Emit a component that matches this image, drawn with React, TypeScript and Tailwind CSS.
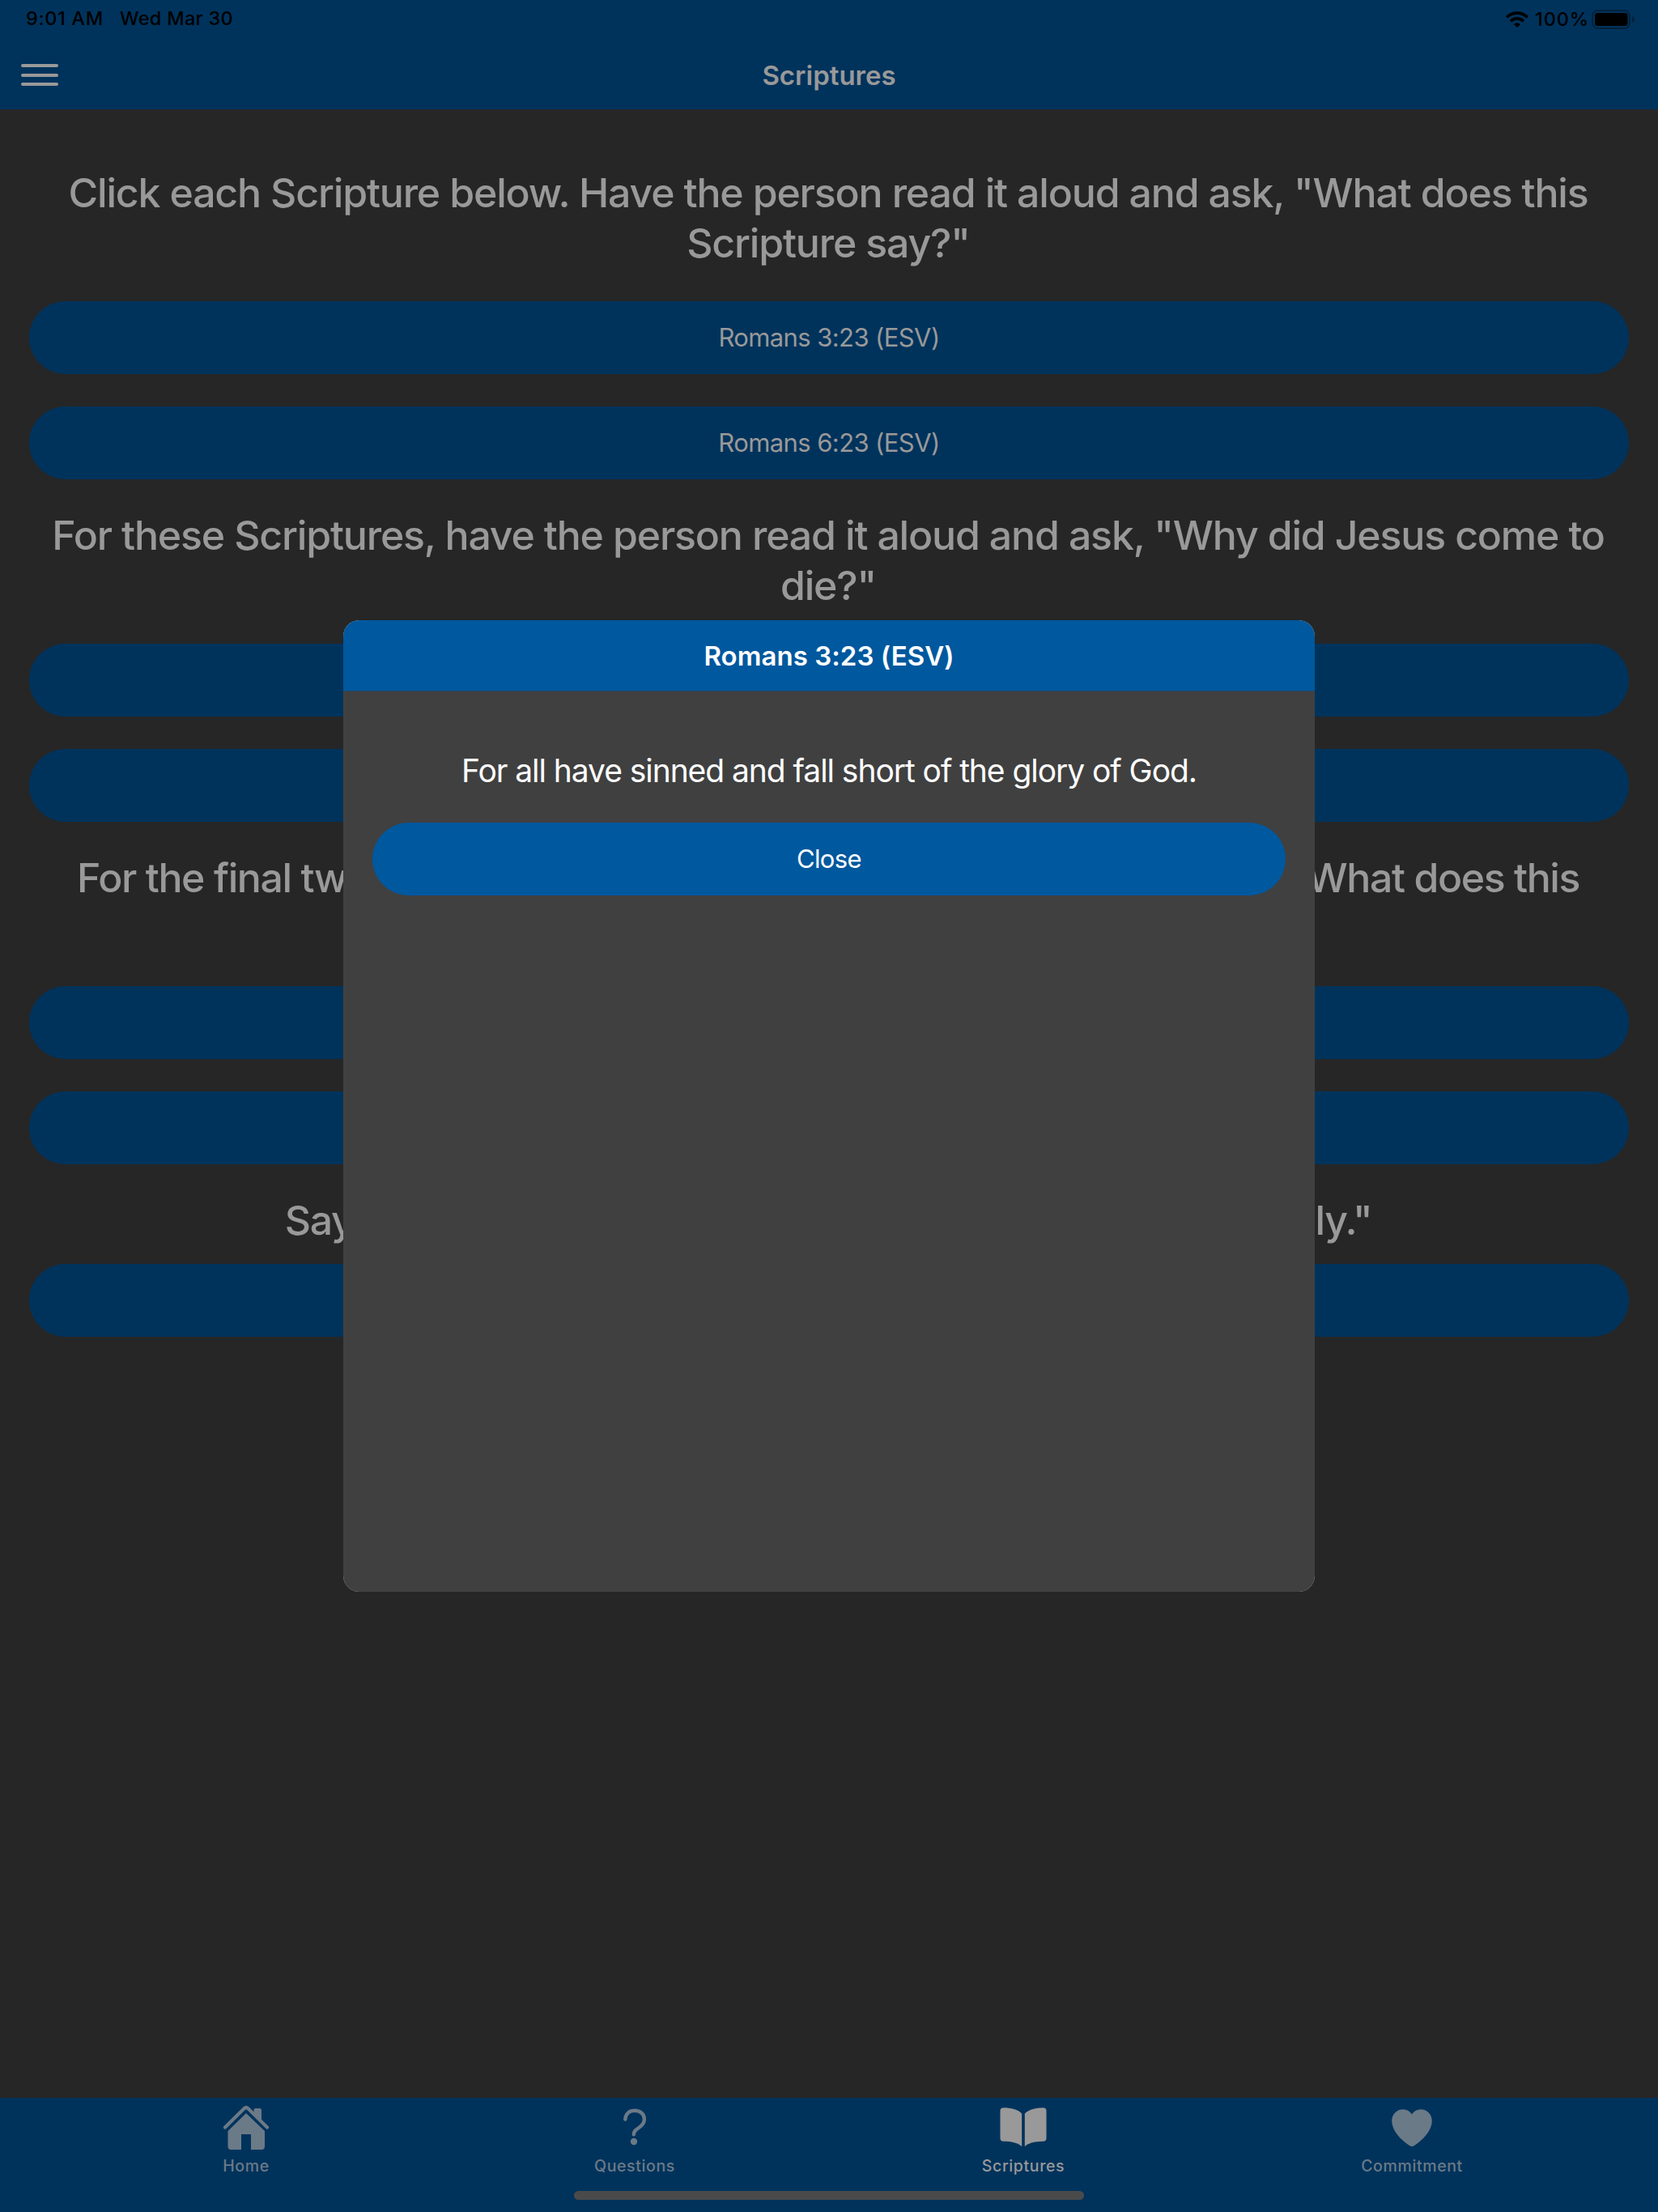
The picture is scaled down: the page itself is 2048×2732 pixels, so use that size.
import type { ReactNode } from "react";

const pillText = "pt-px text-[31px] tracking-[-0.6px]";

function Heading({ children }: { children: ReactNode }) {
  return (
    <h2 className="whitespace-nowrap pr-0.5 text-center text-[50px] font-medium leading-[62px] tracking-[-1.17px] text-[#999999]">
      {children}
    </h2>
  );
}

function Pill({ children }: { children: ReactNode }) {
  return (
    <button
      className={`flex h-[90px] w-full items-center justify-center rounded-full bg-[#00335c] text-[#999999] ${pillText}`}
    >
      {children}
    </button>
  );
}

function Group({ heading, first, second }: { heading: ReactNode; first: string; second: string }) {
  return (
    <section className="flex h-[423px] flex-col">
      <Heading>{heading}</Heading>
      <div className="mt-[41px] flex flex-col gap-10">
        <Pill>{first}</Pill>
        <Pill>{second}</Pill>
      </div>
    </section>
  );
}

function StatusBar() {
  return (
    <div className="flex h-[48px] items-center justify-between pl-8 pr-7 text-[23.5px] font-[450] leading-[46px] text-black">
      <div className="flex h-[46px] self-start">
        <span className="w-[116px] tracking-[0.65px]">9:01 AM</span>
        <span className="tracking-[0.3px]">Wed Mar 30</span>
      </div>
      <div className="flex h-[47px] items-center self-start">
        <svg width="28" height="20" viewBox="0 0 28 20" fill="none" stroke="#000" strokeWidth="3.600">
          <path d="M1.200 7.400A18.200 18.200 0 0 1 26.800 7.400" />
          <path d="M6 12.200A11.400 11.400 0 0 1 22 12.200" />
          <path d="M14 20L9.800 15.900A6 6 0 0 1 18.200 15.900Z" fill="#000" stroke="none" />
        </svg>
        <span className="ml-2 w-[70px] tracking-[0.9px]">100%</span>
        <svg width="54" height="24" viewBox="0 0 54 24">
          <rect x="1" y="1" width="46" height="22" rx="6.500" fill="none" stroke="#00213b" strokeWidth="2" />
          <rect x="4" y="4" width="40.500" height="16" rx="3.500" fill="#000" />
          <path d="M50 8C54 9.500 54 14.500 50 16Z" fill="#00213b" />
        </svg>
      </div>
    </div>
  );
}

const tabs = [
  {
    label: "Home",
    active: false,
    icon: (
      <svg width="58" height="56" viewBox="0 0 58 56" fill="currentColor">
        <path d="M3 27.500L26.500 4.200Q29 1.800 31.500 4.200L55 27.500" fill="none" stroke="currentColor" strokeWidth="4.200" strokeLinecap="round" />
        <path d="M38.500 9V6Q38.500 4 40.500 4H46Q48 4 48 6V20Z" />
        <path d="M29 10L52 32V51Q52 55 48 55H35V36H23V55H10.500Q6.500 55 6.500 51V32Z" />
      </svg>
    ),
  },
  {
    label: "Questions",
    active: false,
    icon: (
      <svg width="58" height="56" viewBox="0 0 58 56" fill="none">
        <path d="M17.300 17.500C17.800 10.500 22.300 6.800 29 6.800C36 6.800 40.900 11.200 40.900 17.200C40.900 22.500 38 25.300 34 28C30 30.700 27.800 32.500 27.800 36.200" stroke="currentColor" strokeWidth="4.400" strokeLinecap="round" />
        <circle cx="28" cy="45" r="4.200" fill="currentColor" />
      </svg>
    ),
  },
  {
    label: "Scriptures",
    active: true,
    icon: (
      <svg width="58" height="56" viewBox="0 0 58 56" fill="currentColor">
        <path d="M27.200 10.500C23 5.500 14 3.300 4.500 3.300Q0.500 3.300 0.500 7.300V40.500Q0.500 44.800 4.500 44.800C14 44.800 22 46.500 27.200 51Z" />
        <path d="M30.800 10.500C35 5.500 44 3.300 53.500 3.300Q57.500 3.300 57.500 7.300V40.500Q57.500 44.800 53.500 44.800C44 44.800 36 46.500 30.800 51Z" />
      </svg>
    ),
  },
  {
    label: "Commitment",
    active: false,
    icon: (
      <svg width="58" height="56" viewBox="0 0 58 56" fill="currentColor">
        <path d="M29 11.200C31.500 7.300 35.500 5.200 39.800 5.200C48 5.200 53.800 11.500 53.800 19.500C53.800 31 43.500 42.500 31.500 50.200Q29 51.700 26.500 50.200C14.500 42.500 4.200 31 4.200 19.500C4.200 11.500 10 5.200 18.200 5.200C22.500 5.200 26.500 7.300 29 11.200Z" />
      </svg>
    ),
  },
];

export default function App() {
  return (
    <div className="relative flex h-[2732px] w-[2048px] flex-col overflow-hidden bg-[#262626] font-['Inter',sans-serif]">
      <header className="h-[135px] shrink-0 bg-[#00335c]">
        <StatusBar />
        <div className="grid h-[89px] grid-cols-[1fr_auto_1fr] items-center pl-[26px] pr-[26px]">
          <button aria-label="Menu" className="flex w-[46px] flex-col gap-[7.6px]">
            <span className="h-1 rounded-full bg-[#999999]" />
            <span className="h-1 rounded-full bg-[#999999]" />
            <span className="h-1 rounded-full bg-[#999999]" />
          </button>
          <h1 className="text-[33px] font-semibold leading-[48px] text-[#999999]">Scriptures</h1>
        </div>
      </header>

      <main className="flex grow flex-col px-9 pt-[72px]">
        <Group
          heading={
            <>
              Click each Scripture below. Have the person read it aloud and ask, "What does this
              <br />
              Scripture say?"
            </>
          }
          first="Romans 3:23 (ESV)"
          second="Romans 6:23 (ESV)"
        />
        <Group
          heading={
            <>
              For these Scriptures, have the person read it aloud and ask, "Why did Jesus come to
              <br />
              die?"
            </>
          }
          first="John 3:3 (ESV)"
          second="John 14:6 (ESV)"
        />
        <Group
          heading={
            <>
              <span className="tracking-[-1.42px]">
                For the final two Scriptures, have the person read it aloud and ask, "What does this
              </span>
              <br />
              mean to you?"
            </>
          }
          first="Romans 10:9-11 (ESV)"
          second="2 Corinthians 5:15 (ESV)"
        />
        <section className="flex flex-col gap-[23px]">
          <Heading>
            <span className="tracking-[-1.32px]">Say, "Here is how you can receive Jesus Christ personally."</span>
          </Heading>
          <Pill>Revelation 3:20 (ESV)</Pill>
        </section>
      </main>

      <footer className="flex h-[141px] shrink-0 flex-col items-center bg-[#00335c]">
        <nav className="flex h-[115px] w-[1920px] pt-[9px]">
          {tabs.map((tab) => (
            <button
              key={tab.label}
              className={`flex w-[480px] flex-col items-center text-[19.5px] font-medium leading-6 tracking-[0.63px] ${tab.active ? "text-[#999999]" : "text-[#6b7a87]"}`}
            >
              {tab.icon}
              <span className="mt-[7px]">{tab.label}</span>
            </button>
          ))}
        </nav>
        <div className="h-[11px] w-[630px] rounded-full bg-[#4a4a4a]" />
      </footer>

      <div className="absolute inset-0 flex items-center justify-center">
        <div role="dialog" className="flex h-[1200px] w-[1200px] flex-col rounded-[20px] bg-[#d0d0d0]">
          <h2 className="flex h-[87px] items-center justify-center rounded-t-[20px] bg-[#00589e] pt-0.5 text-[33px] font-semibold tracking-[0.05px] text-white">
            Romans 3:23 (ESV)
          </h2>
          <div className="flex grow flex-col rounded-b-[20px] border-t border-[#254666] bg-[#404040] px-9 pt-[74px]">
            <p className="text-center text-[39px] leading-[48px] tracking-[-1.06px] text-white">
              For all have sinned and fall short of the glory of God.
            </p>
            <button
              className={`mt-10 flex h-[90px] w-full items-center justify-center rounded-full bg-[#00589e] text-white ${pillText}`}
            >
              Close
            </button>
          </div>
        </div>
      </div>
    </div>
  );
}
